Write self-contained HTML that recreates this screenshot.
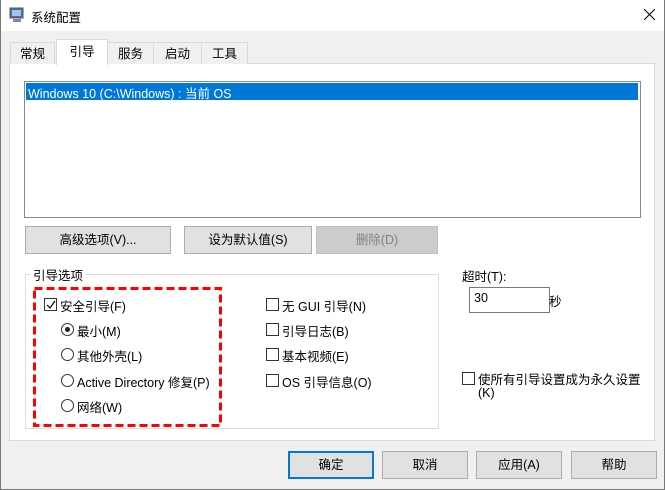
<!DOCTYPE html>
<html><head><meta charset="utf-8"><style>
*{box-sizing:border-box;margin:0;padding:0}
body{width:665px;height:490px;background:#f0f0f0;font-family:"Liberation Sans","Noto Sans CJK SC",sans-serif;font-size:12.5px;color:#000;position:relative;overflow:hidden}
.a{position:absolute}
.win{left:0;top:0;width:665px;height:490px;border:1px solid #777;border-top:none}
.title{left:0;top:0;width:665px;height:31px;background:#fff}
.tab{position:absolute;border:1px solid #d9d9d9;border-bottom:none;background:#f0f0f0;text-align:center;font-size:12.5px}
.btn{position:absolute;border:1px solid #adadad;background:#e1e1e1;text-align:center;line-height:26px;font-size:12.5px}
.cb{position:absolute;width:13px;height:13px;border:1px solid #333;background:#fff}
.rb{position:absolute;width:13px;height:13px;border:1px solid #333;border-radius:50%;background:#fff}
.t{position:absolute;white-space:nowrap;font-size:12.5px}
</style></head><body>
<div class="a title"></div>
<div class="a win"></div>
<svg class="a" style="left:9px;top:7px" width="16" height="16"><rect x="1" y="1" width="13" height="10" fill="#4a6fa5" stroke="#555"/><rect x="3" y="3" width="9" height="6" fill="#9ec4ee"/><rect x="4" y="12" width="8" height="3" fill="#888"/></svg>
<div class="t" style="left:31px;top:7px">系统配置</div>
<svg class="a" style="left:644px;top:9px" width="11" height="11"><path d="M0 0L11 11M11 0L0 11" stroke="#000" stroke-width="1"/></svg>
<div class="a" style="left:9px;top:63px;width:646px;height:378px;background:#fff;border:1px solid #d9d9d9"></div>
<div class="tab" style="left:10px;top:42px;width:45px;height:22px;line-height:22px">常规</div>
<div class="tab" style="left:56px;top:39px;width:52px;height:26px;line-height:24px;background:#fff;z-index:2">引导</div>
<div class="tab" style="left:107px;top:42px;width:47px;height:22px;line-height:22px">服务</div>
<div class="tab" style="left:153px;top:42px;width:49px;height:22px;line-height:22px">启动</div>
<div class="tab" style="left:201px;top:42px;width:47px;height:22px;line-height:22px">工具</div>
<div class="a" style="left:24px;top:81px;width:617px;height:137px;border:1px solid #828790;background:#fff"></div>
<div class="a" style="left:26px;top:83px;width:612px;height:17px;background:#0078d7"></div>
<div class="t" style="left:28px;top:83px;color:#fff">Windows 10 (C:\Windows) : 当前 OS</div>
<div class="btn" style="left:25px;top:226px;width:146px;height:28px">高级选项(V)...</div>
<div class="btn" style="left:184px;top:226px;width:128px;height:28px">设为默认值(S)</div>
<div class="btn" style="left:316px;top:226px;width:122px;height:28px;background:#ccc;border-color:#bfbfbf;color:#838383">删除(D)</div>
<div class="a" style="left:25px;top:274px;width:414px;height:155px;border:1px solid #dcdcdc"></div>
<div class="t" style="left:31px;top:265px;background:#fff;padding:0 2px">引导选项</div>
<svg class="a" style="left:33px;top:287px" width="190" height="141"><rect x="1.5" y="1.5" width="186" height="137" fill="none" stroke="#f00" stroke-width="3" stroke-dasharray="8,4"/></svg>
<div class="cb" style="left:44px;top:298px"></div>
<svg class="a" style="left:45px;top:299px" width="12" height="12"><path d="M2 6L5 9L10 2" stroke="#000" fill="none" stroke-width="1.2"/></svg>
<div class="t" style="left:60px;top:296px">安全引导(F)</div>
<div class="rb" style="left:61px;top:323px"></div><div class="a" style="left:65px;top:327px;width:5px;height:5px;border-radius:50%;background:#222"></div>
<div class="t" style="left:77px;top:321px">最小(M)</div>
<div class="rb" style="left:61px;top:348px"></div><div class="t" style="left:77px;top:346px">其他外壳(L)</div>
<div class="rb" style="left:61px;top:374px"></div><div class="t" style="left:77px;top:372px">Active Directory 修复(P)</div>
<div class="rb" style="left:61px;top:399px"></div><div class="t" style="left:77px;top:397px">网络(W)</div>
<div class="cb" style="left:266px;top:298px"></div><div class="t" style="left:282px;top:296px">无 GUI 引导(N)</div>
<div class="cb" style="left:266px;top:323px"></div><div class="t" style="left:282px;top:321px">引导日志(B)</div>
<div class="cb" style="left:266px;top:348px"></div><div class="t" style="left:282px;top:346px">基本视频(E)</div>
<div class="cb" style="left:266px;top:374px"></div><div class="t" style="left:282px;top:372px">OS 引导信息(O)</div>
<div class="t" style="left:462px;top:266px">超时(T):</div>
<div class="a" style="left:469px;top:287px;width:81px;height:26px;border:1px solid #7a7a7a;background:#fff"></div>
<div class="t" style="left:474px;top:291px">30</div>
<div class="t" style="left:549px;top:291px">秒</div>
<div class="cb" style="left:462px;top:372px"></div>
<div class="t" style="left:478px;top:369px">使所有引导设置成为永久设置</div>
<div class="t" style="left:478px;top:386px">(K)</div>
<div class="btn" style="left:288px;top:451px;width:86px;height:28px;border:2px solid #0078d7;line-height:24px">确定</div>
<div class="btn" style="left:382px;top:451px;width:86px;height:28px">取消</div>
<div class="btn" style="left:476px;top:451px;width:86px;height:28px">应用(A)</div>
<div class="btn" style="left:571px;top:451px;width:86px;height:28px">帮助</div>
</body></html>
